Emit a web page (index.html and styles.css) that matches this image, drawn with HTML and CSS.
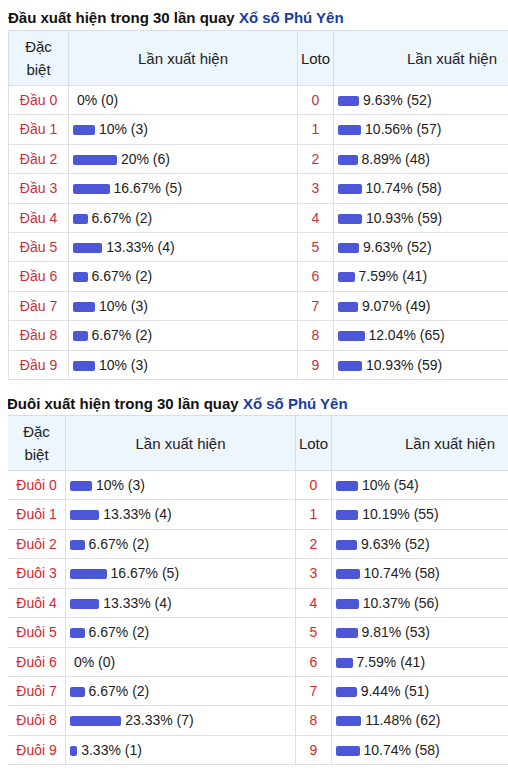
FILE: index.html
```html
<!DOCTYPE html>
<html lang="vi">
<head>
<meta charset="utf-8">
<title>Thống kê đầu đuôi</title>
<link rel="stylesheet" href="styles.css">
</head>
<body>
<section class="block">
  <h2 class="title">Đầu xuất hiện trong 30 lần quay <a class="link" href="#">Xổ số Phú Yên</a></h2>
  <div class="clip">
  <table class="stat">
    <colgroup><col class="c1"><col class="c2"><col class="c3"><col class="c4"></colgroup>
    <thead>
      <tr><th>Đặc<br>biệt</th><th>Lần xuất hiện</th><th>Loto</th><th>Lần xuất hiện</th></tr>
    </thead>
    <tbody>
      <tr><td class="lbl">Đầu 0</td><td><span class="bar" style="width:0px"></span> 0% (0)</td><td class="num">0</td><td><span class="bar" style="width:21.2px"></span> 9.63% (52)</td></tr>
      <tr><td class="lbl">Đầu 1</td><td><span class="bar" style="width:22px"></span> 10% (3)</td><td class="num">1</td><td><span class="bar" style="width:23.2px"></span> 10.56% (57)</td></tr>
      <tr><td class="lbl">Đầu 2</td><td><span class="bar" style="width:44px"></span> 20% (6)</td><td class="num">2</td><td><span class="bar" style="width:19.6px"></span> 8.89% (48)</td></tr>
      <tr><td class="lbl">Đầu 3</td><td><span class="bar" style="width:36.7px"></span> 16.67% (5)</td><td class="num">3</td><td><span class="bar" style="width:23.6px"></span> 10.74% (58)</td></tr>
      <tr><td class="lbl">Đầu 4</td><td><span class="bar" style="width:14.7px"></span> 6.67% (2)</td><td class="num">4</td><td><span class="bar" style="width:24px"></span> 10.93% (59)</td></tr>
      <tr><td class="lbl">Đầu 5</td><td><span class="bar" style="width:29.3px"></span> 13.33% (4)</td><td class="num">5</td><td><span class="bar" style="width:21.2px"></span> 9.63% (52)</td></tr>
      <tr><td class="lbl">Đầu 6</td><td><span class="bar" style="width:14.7px"></span> 6.67% (2)</td><td class="num">6</td><td><span class="bar" style="width:16.7px"></span> 7.59% (41)</td></tr>
      <tr><td class="lbl">Đầu 7</td><td><span class="bar" style="width:22px"></span> 10% (3)</td><td class="num">7</td><td><span class="bar" style="width:20px"></span> 9.07% (49)</td></tr>
      <tr><td class="lbl">Đầu 8</td><td><span class="bar" style="width:14.7px"></span> 6.67% (2)</td><td class="num">8</td><td><span class="bar" style="width:26.5px"></span> 12.04% (65)</td></tr>
      <tr><td class="lbl">Đầu 9</td><td><span class="bar" style="width:22px"></span> 10% (3)</td><td class="num">9</td><td><span class="bar" style="width:24px"></span> 10.93% (59)</td></tr>
    </tbody>
  </table>
  </div>
</section>

<section class="block block2">
  <h2 class="title">Đuôi xuất hiện trong 30 lần quay <a class="link" href="#">Xổ số Phú Yên</a></h2>
  <div class="clip">
  <table class="stat stat2">
    <colgroup><col class="c1"><col class="c2"><col class="c3"><col class="c4"></colgroup>
    <thead>
      <tr><th>Đặc<br>biệt</th><th>Lần xuất hiện</th><th>Loto</th><th>Lần xuất hiện</th></tr>
    </thead>
    <tbody>
      <tr><td class="lbl">Đuôi 0</td><td><span class="bar" style="width:22px"></span> 10% (3)</td><td class="num">0</td><td><span class="bar" style="width:22px"></span> 10% (54)</td></tr>
      <tr><td class="lbl">Đuôi 1</td><td><span class="bar" style="width:29.3px"></span> 13.33% (4)</td><td class="num">1</td><td><span class="bar" style="width:22.4px"></span> 10.19% (55)</td></tr>
      <tr><td class="lbl">Đuôi 2</td><td><span class="bar" style="width:14.7px"></span> 6.67% (2)</td><td class="num">2</td><td><span class="bar" style="width:21.2px"></span> 9.63% (52)</td></tr>
      <tr><td class="lbl">Đuôi 3</td><td><span class="bar" style="width:36.7px"></span> 16.67% (5)</td><td class="num">3</td><td><span class="bar" style="width:23.6px"></span> 10.74% (58)</td></tr>
      <tr><td class="lbl">Đuôi 4</td><td><span class="bar" style="width:29.3px"></span> 13.33% (4)</td><td class="num">4</td><td><span class="bar" style="width:22.8px"></span> 10.37% (56)</td></tr>
      <tr><td class="lbl">Đuôi 5</td><td><span class="bar" style="width:14.7px"></span> 6.67% (2)</td><td class="num">5</td><td><span class="bar" style="width:21.6px"></span> 9.81% (53)</td></tr>
      <tr><td class="lbl">Đuôi 6</td><td><span class="bar" style="width:0px"></span> 0% (0)</td><td class="num">6</td><td><span class="bar" style="width:16.7px"></span> 7.59% (41)</td></tr>
      <tr><td class="lbl">Đuôi 7</td><td><span class="bar" style="width:14.7px"></span> 6.67% (2)</td><td class="num">7</td><td><span class="bar" style="width:20.8px"></span> 9.44% (51)</td></tr>
      <tr><td class="lbl">Đuôi 8</td><td><span class="bar" style="width:51.3px"></span> 23.33% (7)</td><td class="num">8</td><td><span class="bar" style="width:25.3px"></span> 11.48% (62)</td></tr>
      <tr><td class="lbl">Đuôi 9</td><td><span class="bar" style="width:7.3px"></span> 3.33% (1)</td><td class="num">9</td><td><span class="bar" style="width:23.6px"></span> 10.74% (58)</td></tr>
    </tbody>
  </table>
  </div>
</section>
</body>
</html>
```

FILE: styles.css
```css
html, body {
  overflow: hidden;
}
body {
  margin: 8px 0 0 8px;
  background: #ffffff;
  font-family: "Liberation Sans", Arial, sans-serif;
  color: #222222;
}
.block {
  display: flex;
  flex-direction: column;
}
.block2 {
  margin: 14px 0 0 -1px;
}
.clip {
  overflow: hidden;
}
.title {
  margin: 0 0 2px 0;
  font-size: 15px;
  line-height: 20px;
  font-weight: bold;
  color: #111111;
  white-space: nowrap;
}
.block2 .title {
  margin-bottom: 1px;
}
.link {
  color: #1a3ba0;
  text-decoration: none;
}
.stat {
  border-collapse: collapse;
  table-layout: fixed;
  width: 562px;
  font-size: 14px;
}
.c1 { width: 60px; }
.c2 { width: 229px; }
.c3 { width: 36px; }
.c4 { width: 237px; }
.stat2 .c1 { width: 58px; }
.stat2 .c2 { width: 230px; }
.stat th {
  background: #edf5fd;
  font-weight: normal;
  font-size: 15px;
  line-height: 23px;
  padding: 4px 2px;
  border: 1px solid #d8dee6;
  color: #222222;
  text-align: center;
}
.stat td {
  border: 1px solid #dde1e6;
  padding: 4px 4px;
  line-height: 20.4px;
  white-space: nowrap;
  color: #222222;
}
.stat td.lbl,
.stat td.num {
  text-align: center;
  color: #c8313b;
}
.stat2 td.lbl,
.stat2 td.num {
  color: #d9272e;
}
.bar {
  display: inline-block;
  height: 10px;
  background: #4b57d6;
  border-radius: 2px;
  vertical-align: -1px;
}
```
